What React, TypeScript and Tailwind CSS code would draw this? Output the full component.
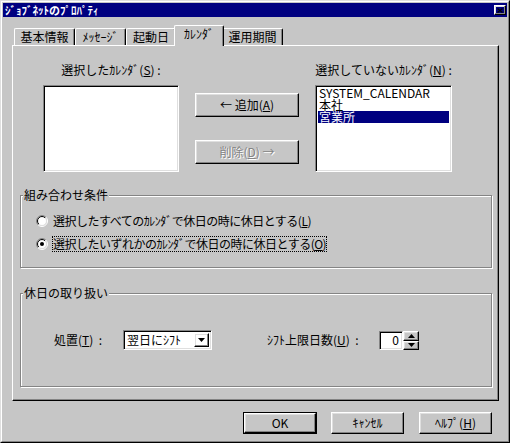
import React from "react";

const FONT = "font-['Noto_Sans_CJK_JP','Noto_Sans_CJK_SC',sans-serif]";

// raised 3d frame used by buttons, tabs' neighbours etc.
const RAISED =
  "border border-t-white border-l-white border-r-black border-b-black shadow-[inset_-1px_-1px_0_#848484,inset_1px_1px_0_#dfdfdf]";
const SUNKEN =
  "border border-t-[#848484] border-l-[#848484] border-r-white border-b-white shadow-[inset_1px_1px_0_#000,inset_-1px_-1px_0_#dfdfdf]";

function Radio({ checked, id }: { checked?: boolean; id: string }) {
  return (
    <svg width="12" height="12" viewBox="0 0 12 12" className="shrink-0">
      <defs>
        <linearGradient id={`o-${id}`} x1="0" y1="0" x2="1" y2="1">
          <stop offset="0.5" stopColor="#848484" />
          <stop offset="0.5" stopColor="#ffffff" />
        </linearGradient>
        <linearGradient id={`i-${id}`} x1="0" y1="0" x2="1" y2="1">
          <stop offset="0.5" stopColor="#000000" />
          <stop offset="0.5" stopColor="#dfdfdf" />
        </linearGradient>
      </defs>
      <circle cx="6" cy="6" r="5.5" fill="none" stroke={`url(#o-${id})`} strokeWidth="1" />
      <circle cx="6" cy="6" r="4.5" fill="#fff" stroke={`url(#i-${id})`} strokeWidth="1" />
      {checked && <circle cx="6" cy="6" r="2" fill="#000" />}
    </svg>
  );
}

function Tab({ label, width, selected }: { label: string; width: string; selected?: boolean }) {
  if (selected) {
    return (
      <div
        className={`relative z-10 -mx-[2px] -mb-px h-[21px] ${width} flex items-start justify-center pt-[2px] bg-[#c6c6c6] border-l border-t border-r border-l-white border-t-white border-r-black rounded-t-[2px] shadow-[inset_-1px_0_0_#848484]`}
      >
        {label}
      </div>
    );
  }
  return (
    <div
      className={`h-[17px] ${width} flex items-center justify-center border-l border-t border-r border-l-white border-t-white border-r-black rounded-t-[2px] shadow-[inset_-1px_0_0_#848484]`}
    >
      {label}
    </div>
  );
}

function Button({ children, className = "", disabled }: { children: React.ReactNode; className?: string; disabled?: boolean }) {
  return (
    <div
      className={`${RAISED} flex items-center justify-center ${
        disabled ? "text-[#848484] [text-shadow:1px_1px_0_#fff]" : ""
      } ${className}`}
    >
      {children}
    </div>
  );
}

function GroupBox({ title, className = "", children }: { title: string; className?: string; children?: React.ReactNode }) {
  return (
    <div
      className={`relative border border-[#848484] shadow-[inset_1px_1px_0_#fff,1px_1px_0_#fff] ${className}`}
    >
      <span className="absolute -top-[7px] left-[2px] px-px bg-[#c6c6c6] leading-[12px]">{title}</span>
      {children}
    </div>
  );
}

export default function App() {
  return (
    <div
      className={`w-[510px] h-[443px] bg-[#c6c6c6] text-black text-[12px] leading-[12px] ${FONT} border border-t-[#dfdfdf] border-l-[#dfdfdf] border-r-black border-b-black`}
    >
      <div className="h-full flex flex-col p-px border border-t-white border-l-white border-r-[#848484] border-b-[#848484]">
        {/* Title bar */}
        <div className="h-[14px] bg-[#000080] flex items-center justify-between pl-[2px] pr-[1px]">
          <span className="text-white font-bold text-[11px] leading-[11px]">ｼﾞｮﾌﾞﾈｯﾄのﾌﾟﾛﾊﾟﾃｨ</span>
          <div className={`${RAISED} w-[12px] h-[10px] flex items-center justify-center`}>
            <svg width="6" height="5" viewBox="0 0 6 5">
              <path d="M0.5 0.5 L5.5 4.5 M5.5 0.5 L0.5 4.5" stroke="#000" strokeWidth="1.2" />
            </svg>
          </div>
        </div>

        {/* Tabs */}
        <div className="mt-[8px] ml-[9px] h-[20px] flex items-end pl-[2px]">
          <Tab label="基本情報" width="w-[61px]" />
          <Tab label="ﾒｯｾｰｼﾞ" width="w-[51px]" />
          <Tab label="起動日" width="w-[50px]" />
          <Tab label="ｶﾚﾝﾀﾞ" width="w-[50px]" selected />
          <Tab label="運用期間" width="w-[61px]" />
        </div>

        {/* Tab panel */}
        <div className="ml-[9px] w-[487px] h-[356px] flex flex-col border border-t-white border-l-white border-r-black border-b-black shadow-[inset_-1px_-1px_0_#848484]">
          <div className="mt-[18px] flex items-start">
            <div className="ml-[30px] w-[136px] flex flex-col items-center">
              <div className="h-[12px] whitespace-nowrap">
                選択したｶﾚﾝﾀﾞ(<u>S</u>) :
              </div>
              <div className={`${SUNKEN} mt-[9px] w-full h-[87px] bg-white`} />
            </div>

            <div className="ml-[16px] w-[104px] flex flex-col">
              <Button className="mt-[29px] h-[24px]">
                ← 追加(<u>A</u>)
              </Button>
              <Button className="mt-[23px] h-[24px]" disabled>
                削除(<u>D</u>) →
              </Button>
            </div>

            <div className="ml-[16px] w-[137px] flex flex-col items-center">
              <div className="h-[12px] whitespace-nowrap">
                選択していないｶﾚﾝﾀﾞ(<u>N</u>) :
              </div>
              <div className={`${SUNKEN} mt-[9px] w-full h-[87px] bg-white py-px px-[2px] flex flex-col`}>
                <div className="h-[12px] leading-[12px] px-px">SYSTEM_CALENDAR</div>
                <div className="h-[12px] leading-[12px] px-px">本社</div>
                <div className="h-[12px] leading-[12px] px-px bg-[#000080] text-white">宮業所</div>
              </div>
            </div>
          </div>

          <GroupBox title="組み合わせ条件" className="mt-[23px] ml-[7px] w-[472px] h-[73px] pt-[17px] pl-[15px]">
            <div className="h-[16px] flex items-center">
              <Radio id="r1" />
              <span className="ml-[4px] h-[16px] flex items-center border border-transparent tracking-[-0.5px]">
                選択したすべてのｶﾚﾝﾀﾞで休日の時に休日とする(<u>L</u>)
              </span>
            </div>
            <div className="mt-[7px] h-[16px] flex items-center">
              <Radio id="r2" checked />
              <span className="ml-[4px] h-[16px] flex items-center border border-dotted border-black tracking-[-0.5px]">
                選択したいずれかのｶﾚﾝﾀﾞで休日の時に休日とする(<u>O</u>)
              </span>
            </div>
          </GroupBox>

          <GroupBox title="休日の取り扱い" className="mt-[25px] ml-[7px] w-[472px] h-[94px] pt-[36px] pl-[33px]">
            <div className="h-[20px] flex items-center">
              <span className="w-[69px] whitespace-nowrap">
                処置(<u>T</u>)&nbsp;&nbsp;:
              </span>
              <div className={`${SUNKEN} w-[89px] h-[20px] bg-white flex items-center p-[2px]`}>
                <span className="flex-1 pl-px whitespace-nowrap">翌日にｼﾌﾄ</span>
                <div className={`${RAISED} w-[15px] h-full flex items-center justify-center`}>
                  <svg width="7" height="4" viewBox="0 0 7 4">
                    <path d="M0 0 H7 L3.5 4 Z" fill="#000" />
                  </svg>
                </div>
              </div>
              <span className="ml-[55px] w-[112px] whitespace-nowrap">
                ｼﾌﾄ上限日数(<u>U</u>)&nbsp;&nbsp;:
              </span>
              <div className={`${SUNKEN} w-[24px] h-[19px] bg-white flex items-center justify-end pr-[3px]`}>
                0
              </div>
              <div className="w-[16px] h-[19px] flex flex-col">
                <div className={`${RAISED} h-[10px] flex items-center justify-center`}>
                  <svg width="7" height="4" viewBox="0 0 7 4">
                    <path d="M0 4 H7 L3.5 0 Z" fill="#000" />
                  </svg>
                </div>
                <div className={`${RAISED} h-[9px] flex items-center justify-center`}>
                  <svg width="7" height="4" viewBox="0 0 7 4">
                    <path d="M0 0 H7 L3.5 4 Z" fill="#000" />
                  </svg>
                </div>
              </div>
            </div>
          </GroupBox>
        </div>

        {/* Dialog buttons */}
        <div className="mt-[11px] flex justify-end pr-[15px]">
          <div className="w-[74px] h-[22px] border border-black mr-[14px] flex">
            <Button className="flex-1">OK</Button>
          </div>
          <Button className="w-[73px] h-[22px] mr-[15px]">ｷｬﾝｾﾙ</Button>
          <Button className="w-[73px] h-[22px]">
            ﾍﾙﾌﾟ(<u>H</u>)
          </Button>
        </div>
      </div>
    </div>
  );
}
